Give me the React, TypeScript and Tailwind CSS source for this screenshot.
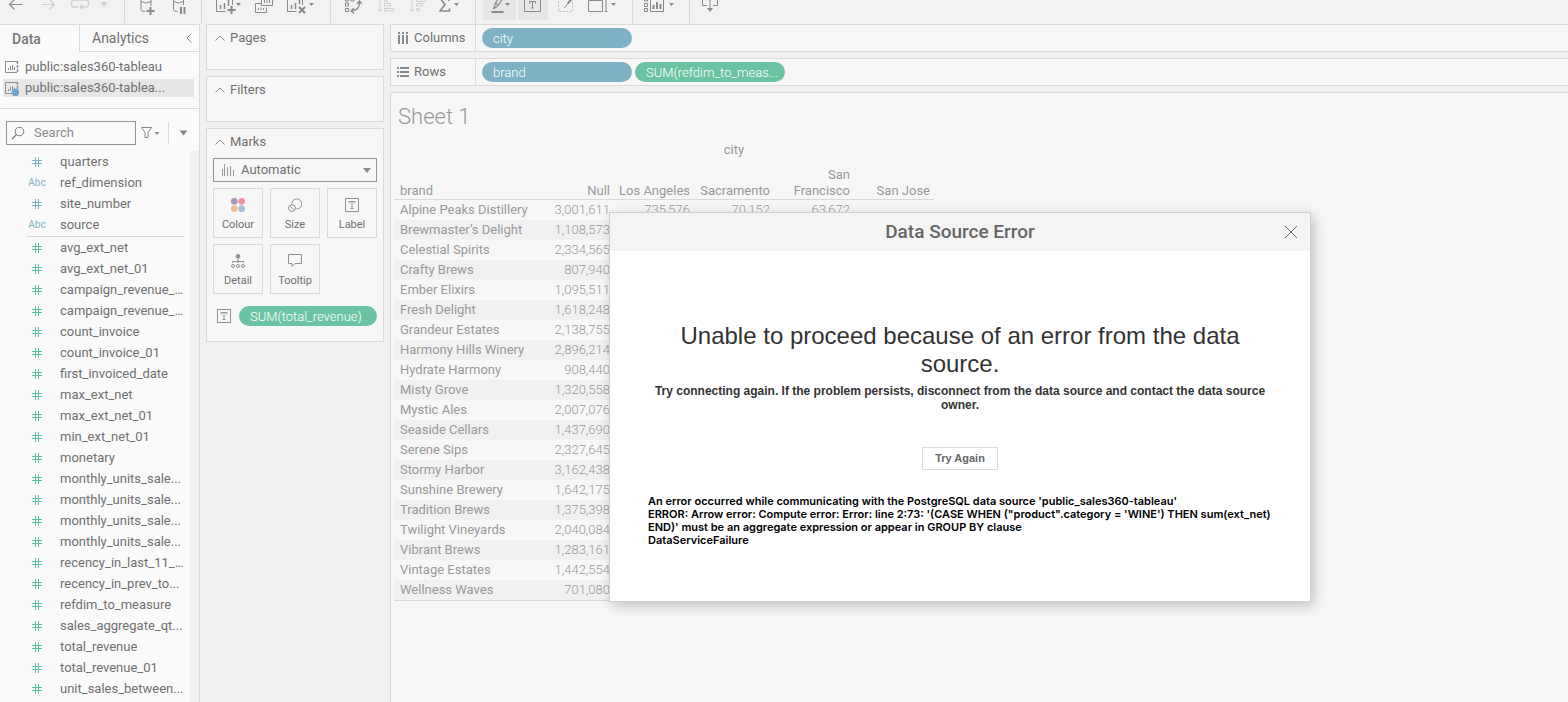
import type { ReactNode } from "react";

type Mark = { label: string; icon: ReactNode };
type Field = { name: string; kind: "number" | "text" };

const dimensions: Field[] = [
  { name: "quarters", kind: "number" },
  { name: "ref_dimension", kind: "text" },
  { name: "site_number", kind: "number" },
  { name: "source", kind: "text" },
];

const measures: string[] = [
  "avg_ext_net",
  "avg_ext_net_01",
  "campaign_revenue_...",
  "campaign_revenue_...",
  "count_invoice",
  "count_invoice_01",
  "first_invoiced_date",
  "max_ext_net",
  "max_ext_net_01",
  "min_ext_net_01",
  "monetary",
  "monthly_units_sale...",
  "monthly_units_sale...",
  "monthly_units_sale...",
  "monthly_units_sale...",
  "recency_in_last_11_...",
  "recency_in_prev_to...",
  "refdim_to_measure",
  "sales_aggregate_qt...",
  "total_revenue",
  "total_revenue_01",
  "unit_sales_between...",
];

const rows: string[][] = [
  ["Alpine Peaks Distillery", "3,001,611", "735,576", "70,152", "63,672", ""],
  ["Brewmaster’s Delight", "1,108,573"],
  ["Celestial Spirits", "2,334,565"],
  ["Crafty Brews", "807,940"],
  ["Ember Elixirs", "1,095,511"],
  ["Fresh Delight", "1,618,248"],
  ["Grandeur Estates", "2,138,755"],
  ["Harmony Hills Winery", "2,896,214"],
  ["Hydrate Harmony", "908,440"],
  ["Misty Grove", "1,320,558"],
  ["Mystic Ales", "2,007,076"],
  ["Seaside Cellars", "1,437,690"],
  ["Serene Sips", "2,327,645"],
  ["Stormy Harbor", "3,162,438"],
  ["Sunshine Brewery", "1,642,175"],
  ["Tradition Brews", "1,375,398"],
  ["Twilight Vineyards", "2,040,084"],
  ["Vibrant Brews", "1,283,161"],
  ["Vintage Estates", "1,442,554"],
  ["Wellness Waves", "701,080"],
];

const cities = ["Null", "Los Angeles", "Sacramento", "San Francisco", "San Jose"];

function Tool({ label, width, className, children }: { label: string; width: number; className: string; children: ReactNode }) {
  return (
    <button type="button" aria-label={label} className={`flex shrink-0 justify-center ${className}`}>
      <svg width={width} height="20" viewBox={`0 0 ${width} 20`} fill="none" stroke="currentColor" aria-hidden="true">
        {children}
      </svg>
    </button>
  );
}

function Rule() {
  return <div className="h-[23px] w-px shrink-0 bg-[#d8d8d8]" />;
}

function Caret({ x, y = 3 }: { x: number; y?: number }) {
  return <path d={`M${x} ${y}h5l-2.5 3z`} fill="currentColor" stroke="none" />;
}

function Toolbar() {
  return (
    <header className="flex h-6 items-start overflow-hidden bg-[#f2f2f2] text-[#8a8a8a]">
      <Tool label="Undo" width={16} className="w-8">
        <path d="M1.500 4.500H14.500M6.500 -.5l-5 5 5 5" strokeWidth="1.200" />
      </Tool>
      <Tool label="Redo" width={16} className="w-8 text-[#cfcfcf]">
        <path d="M1.500 4.500H14.500M9.500 -.5l5 5-5 5" strokeWidth="1.200" />
      </Tool>
      <Tool label="Replay" width={18} className="w-8 text-[#cfcfcf]">
        <path d="M7 7H3A2.500 2.500 0 0 1 .5 4.500V2.500A2.500 2.500 0 0 1 3 0h12a2.500 2.500 0 0 1 2.500 2.500V4.500A2.500 2.500 0 0 1 15 7H9M11.500 4.500L9 7l2.500 2.500" strokeWidth="1.300" />
      </Tool>
      <Tool label="Replay speed" width={8} className="mr-3 w-4 text-[#cfcfcf]">
        <path d="M.5 2h7L4 7z" fill="currentColor" stroke="none" />
      </Tool>
      <Rule />
      <Tool label="New data source" width={15} className="ml-1.5 w-8">
        <path d="M1 -4v13.500q0 2 4 2M1 1.500q5 3 10 0V-4M11 1v5" />
        <path d="M10.500 7v8M6.500 11h8" strokeWidth="2" />
      </Tool>
      <Tool label="Pause updates" width={13} className="mr-1.5 w-8">
        <path d="M.5 -4v13.500q0 2 4 2M.5 1.500q5 3 10 0V-4M10.500 1v4" />
        <path d="M8 7v7M11.500 7v7" strokeWidth="2" />
      </Tool>
      <Rule />
      <Tool label="New worksheet" width={25} className="ml-2 w-9">
        <path d="M.5 -2v13.500h9M16.500 -2v7" />
        <path d="M4.500 5v4M8.500 3v6M12.500 0v6" strokeWidth="1.500" />
        <path d="M15.500 6v8M11.500 10h8" strokeWidth="2" />
        <Caret x={20} />
      </Tool>
      <Tool label="Duplicate" width={19} className="w-9">
        <path d="M6 3.500H.5v9h11v-5M6.500 -2v7.500h11V-2M3.500 8v2M6 7.500V10M8.500 8v2M9.500 0v3M12 0v3M14.500 0v3" />
      </Tool>
      <Tool label="Clear sheet" width={28} className="mr-2.5 w-[38px]">
        <path d="M.5 -2v13.500h9M15.500 -2v7" />
        <path d="M4.500 5v4M8.500 3v6M12.500 0v4" strokeWidth="1.500" />
        <path d="M12 7l6 6M18 7l-6 6" strokeWidth="2" />
        <Caret x={22} />
      </Tool>
      <Rule />
      <Tool label="Swap rows and columns" width={17} className="ml-1.5 w-8">
        <path d="M.5 3h3v3h-3zM.5 8.500h3v3h-3zM.5 -2h3v3h-3zM6 -2h3v3H6z" />
        <path d="M14.500 2q.5 8-8 9M12 4l2.500-3L17 4M9 8l-3 3 3 2.500" strokeWidth="1.300" />
      </Tool>
      <Tool label="Sort ascending" width={17} className="w-8 text-[#cfcfcf]">
        <path d="M3 -2v13M.5 9L3 11.500 5.500 9M7.500 -1h3v2.500h-3zM7.500 3.500h6V6h-6zM7.500 8.500h9V11h-9z" />
      </Tool>
      <Tool label="Sort descending" width={17} className="w-8 text-[#cfcfcf]">
        <path d="M3 -2v13M.5 9L3 11.500 5.500 9M7.500 -1h9v2.500h-9zM7.500 3.500h6V6h-6zM7.500 8.500h3V11h-3z" />
      </Tool>
      <Tool label="Totals" width={20} className="mr-2.5 w-8">
        <path d="M10 1V-1.500H1.500L6 4.500l-5 6.500h9.500V8.500" strokeWidth="1.600" />
        <Caret x={15} />
      </Tool>
      <Rule />
      <Tool label="Highlight" width={20} className="ml-[7px] w-[33px] bg-[#e6e6e6]">
        <path d="M3.500 9l2-6 5-7M3.500 9l5-4 4.500-7M5.500 3l3 2" strokeWidth="1.200" />
        <path d="M1.500 12h12" strokeWidth="2" />
        <Caret x={15} />
      </Tool>
      <Tool label="Show mark labels" width={18} className="ml-0.5 w-[30px] bg-[#e6e6e6]">
        <path d="M.5 -2v13.500h16V-2M5.500 3.500V1.500h6v2M8.500 1.500V8M7 8h3" />
      </Tool>
      <Tool label="Format" width={16} className="ml-0.5 w-8">
        <path d="M.5 -2v13.500h14V-2" strokeDasharray="2 1.500" stroke="#bbb" />
        <path d="M13.500 -1l-4 5" strokeWidth="2" />
        <path d="M9.500 4L6.500 8" />
      </Tool>
      <Tool label="Fit" width={28} className="mr-3 ml-0.5 w-9">
        <path d="M.5 .5h14v11H.5zM18 -2v13.500M16.500 11.500h3" />
        <Caret x={23} />
      </Tool>
      <Rule />
      <Tool label="Show Me" width={30} className="mr-3 ml-2 w-9">
        <path d="M.5 -2h3v3h-3zM.5 3.500h3v3h-3zM.5 8.500h3v3h-3zM6.500 -2v13.500h13V-2" />
        <path d="M9.500 5v4M13 2v7M16.500 4v5" strokeWidth="2" />
        <Caret x={25} />
      </Tool>
      <Rule />
      <Tool label="Download" width={16} className="ml-1 w-8">
        <path d="M5 5.500H.5V-2M11 5.500h4.500V-2M8 0v9" />
        <path d="M5 8h6l-3 4z" fill="currentColor" stroke="none" />
      </Tool>
    </header>
  );
}

function SourceIcon({ active = false }: { active?: boolean }) {
  return (
    <svg width="16" height="16" viewBox="0 0 16 16" fill="none" stroke="#8f8f8f" aria-hidden="true">
      <path d="M14 13.500H2.500v-11h11.500M5.500 9v2M7.500 7v4M9.500 6v5M11.500 8v3" />
      <path d="M14.500 2v12" strokeWidth="1.500" strokeDasharray="3 1" />
      {active && <circle cx="12.400" cy="12.400" r="3.600" fill="#6fa3cc" stroke="none" />}
    </svg>
  );
}

function HashIcon() {
  return (
    <svg width="10" height="10" viewBox="0 0 10 10" fill="none" stroke="currentColor" aria-hidden="true">
      <path d="M0 3.500h10M0 6.500h10M3.500 0v10M6.500 0v10" />
    </svg>
  );
}

function FieldRow({ name, icon, tone }: { name: string; icon: ReactNode; tone: string }) {
  return (
    <li>
      <button type="button" className="flex h-[21px] w-full items-center text-left">
        <span className={`ml-[27px] flex w-5 shrink-0 justify-center text-[10px] ${tone}`}>{icon}</span>
        <span className="ml-[13px] truncate">{name}</span>
      </button>
    </li>
  );
}

function DataPane() {
  return (
    <aside className="flex w-[200px] shrink-0 flex-col border-t border-r border-[#dadada] bg-[#fafafa]">
      <div className="flex h-[27px] text-sm">
        <button type="button" className="w-[79px] pl-3 text-left font-medium text-[#777]">Data</button>
        <div className="flex flex-1 items-center justify-between border-b border-l border-[#dadada] pr-1.5 pl-3">
          <button type="button">Analytics</button>
          <button type="button" aria-label="Collapse pane">
            <svg width="8" height="12" viewBox="0 0 8 12" fill="none" stroke="#8a8a8a" aria-hidden="true">
              <path d="M6.500 1.500L2 6l4.500 4.500" />
            </svg>
          </button>
        </div>
      </div>
      <div className="flex flex-col gap-[3px] border-b border-[#dadada] px-[3px] pt-1.5 pb-[11px]">
        <button type="button" className="mr-0.5 flex h-[18px] items-center gap-1.5">
          <SourceIcon />
          public:sales360-tableau
        </button>
        <button type="button" className="mr-0.5 flex h-[18px] items-center gap-1.5 bg-[#e7e7e7]">
          <SourceIcon active />
          public:sales360-tablea...
        </button>
      </div>
      <div className="flex items-center pt-3 pb-1.5 pl-1.5">
        <label className="flex h-6 w-[130px] items-center gap-2 border border-[#959595] pl-1">
          <svg width="14" height="14" viewBox="0 0 14 14" fill="none" stroke="#777" aria-hidden="true">
            <circle cx="8.500" cy="5.500" r="4.300" />
            <path d="M5.500 8.500L1 13" strokeWidth="1.300" />
          </svg>
          <input aria-label="Search" placeholder="Search" className="w-20 bg-transparent pl-px outline-none placeholder:text-[#8a8a8a]" />
        </label>
        <button type="button" aria-label="Filter fields" className="ml-[5px]">
          <svg width="19" height="14" viewBox="0 0 19 14" fill="none" stroke="#888" aria-hidden="true">
            <path d="M.5 1.500h10L7 6.500v5H4v-5z" />
            <path d="M13.500 6h5L16 9z" fill="#888" stroke="none" />
          </svg>
        </button>
        <div className="ml-2 h-[22px] w-px bg-[#dadada]" />
        <button type="button" aria-label="Data menu" className="ml-2.5">
          <svg width="9" height="8" viewBox="0 0 9 8" aria-hidden="true">
            <path d="M.5 1.500h8l-4 5z" fill="#888" />
          </svg>
        </button>
      </div>
      <div className="flex flex-1">
        <div className="min-w-0 flex-1 pr-1.5">
          <ul>
            {dimensions.map((f) => (
              <FieldRow key={f.name} name={f.name} tone="text-[#7fb3c8]" icon={f.kind === "number" ? <HashIcon /> : "Abc"} />
            ))}
          </ul>
          <hr className="mt-px ml-[27px] border-[#d5d5d5]" />
          <ul>
            {measures.map((name, i) => (
              <FieldRow key={i} name={name} tone="text-[#5fc0a0]" icon={<HashIcon />} />
            ))}
          </ul>
        </div>
        <div className="w-[9px] bg-[#f1f1f1]" />
      </div>
    </aside>
  );
}

function Heading({ children }: { children: ReactNode }) {
  return (
    <h2 className="flex h-[26px] items-center gap-[5px] pl-2">
      <svg width="10" height="6" viewBox="0 0 10 6" fill="none" stroke="#8a8a8a" aria-hidden="true">
        <path d="M.5 5.500L5 1l4.500 4.500" />
      </svg>
      {children}
    </h2>
  );
}

function LabelIcon() {
  return (
    <svg width="14" height="14" viewBox="0 0 14 14" fill="none" stroke="#8f8f8f" aria-hidden="true">
      <path d="M.5 .5h13v13H.5zM4 5.500V3.500h6v2M7 3.500v7M5.500 10.500h3" />
    </svg>
  );
}

const marks: Mark[] = [
  {
    label: "Colour",
    icon: (
      <svg width="14" height="14" viewBox="0 0 14 14" aria-hidden="true">
        <circle cx="3.300" cy="3.300" r="3.400" fill="#a998b9" />
        <circle cx="10.700" cy="3.300" r="3.400" fill="#f193a2" />
        <circle cx="3.300" cy="10.700" r="3.400" fill="#f3bd9b" />
        <circle cx="10.700" cy="10.700" r="3.400" fill="#a5bedb" />
      </svg>
    ),
  },
  {
    label: "Size",
    icon: (
      <svg width="14" height="14" viewBox="0 0 14 14" fill="none" stroke="#8f8f8f" aria-hidden="true">
        <path d="M3.800 5.200a5 5 0 1 1 4.500 5.700" />
        <circle cx="4" cy="10" r="3.400" />
        <path d="M2.500 8.500l3 3" />
      </svg>
    ),
  },
  { label: "Label", icon: <LabelIcon /> },
  {
    label: "Detail",
    icon: (
      <svg width="14" height="14" viewBox="0 0 14 14" fill="none" stroke="#8f8f8f" aria-hidden="true">
        <circle cx="7" cy="2.200" r="2.200" fill="#8f8f8f" stroke="none" />
        <path d="M7 4v5M1.500 9V7.500h11V9" />
        <circle cx="2" cy="12" r="1.500" />
        <circle cx="7" cy="12" r="1.500" />
        <circle cx="12" cy="12" r="1.500" />
      </svg>
    ),
  },
  {
    label: "Tooltip",
    icon: (
      <svg width="14" height="14" viewBox="0 0 14 14" fill="none" stroke="#8f8f8f" aria-hidden="true">
        <path d="M.5 .5h13v9H7l-3 3v-3H.5z" />
      </svg>
    ),
  },
];

function Shelves() {
  return (
    <section className="flex w-[190px] shrink-0 flex-col gap-1.5 px-1.5">
      <div className="h-[46px] border border-[#dadada] bg-[#f7f7f7]">
        <Heading>Pages</Heading>
      </div>
      <div className="h-[46px] border border-[#dadada] bg-[#f7f7f7]">
        <Heading>Filters</Heading>
      </div>
      <div className="border border-[#dadada] bg-[#f7f7f7] pb-[15px]">
        <Heading>Marks</Heading>
        <div className="px-1.5 pt-[3px]">
          <div className="relative">
            <select aria-label="Mark type" className="block h-6 w-full appearance-none border border-[#959595] bg-transparent pl-[27px] outline-none">
              <option>Automatic</option>
            </select>
            <svg className="pointer-events-none absolute top-1.5 left-2" width="14" height="12" viewBox="0 0 14 12" fill="none" stroke="#999" aria-hidden="true">
              <path d="M1.500 5v7M3.500 0v12M6.500 3v9M9.500 2v10M12.500 6v6" />
            </svg>
            <svg className="pointer-events-none absolute top-2.5 right-1.5" width="8" height="5" viewBox="0 0 8 5" aria-hidden="true">
              <path d="M0 0h8L4 5z" fill="#8a8a8a" />
            </svg>
          </div>
          <div className="mt-1.5 grid grid-cols-[50px_50px_50px] justify-between gap-y-1.5">
            {marks.map((m) => (
              <button key={m.label} type="button" className="flex h-[50px] flex-col items-center gap-[5px] border border-[#dadada] pt-[9px] text-[11px] leading-[15px]">
                {m.icon}
                {m.label}
              </button>
            ))}
          </div>
          <div className="mt-3 flex items-center gap-2 pl-1">
            <LabelIcon />
            <button type="button" className="h-5 flex-1 rounded-full bg-[#6cc3a4] pt-px pl-[11px] text-left font-light text-white">SUM(total_revenue)</button>
          </div>
        </div>
      </div>
    </section>
  );
}

function Shelf({ icon, label, children }: { icon: ReactNode; label: string; children: ReactNode }) {
  return (
    <div className="flex h-7 border-y border-l border-[#dadada] bg-[#f7f7f7]">
      <div className="flex w-[85px] items-center gap-[5px] border-r border-[#dadada] pl-1.5">
        {icon}
        {label}
      </div>
      <div className="flex items-center gap-[3px] pl-1.5">{children}</div>
    </div>
  );
}

function Sheet() {
  return (
    <main className="flex min-w-0 flex-1 flex-col gap-1.5">
      <Shelf
        label="Columns"
        icon={
          <svg width="12" height="12" viewBox="0 0 12 12" fill="none" stroke="#8a8a8a" strokeWidth="2" aria-hidden="true">
            <path d="M2 0v2M6 0v2M10 0v2M2 3v9M6 3v9M10 3v9" />
          </svg>
        }
      >
        <button type="button" className="h-5 w-[150px] rounded-full bg-[#7fb2c7] pt-px pl-[11px] text-left font-light text-white">city</button>
      </Shelf>
      <Shelf
        label="Rows"
        icon={
          <svg width="12" height="12" viewBox="0 0 12 12" fill="none" stroke="#8a8a8a" strokeWidth="2" aria-hidden="true">
            <path d="M0 2h2M0 6h2M0 10h2M3 2h9M3 6h9M3 10h9" />
          </svg>
        }
      >
        <button type="button" className="h-5 w-[150px] rounded-full bg-[#7fb2c7] pt-px pl-[11px] text-left font-light text-white">brand</button>
        <button type="button" className="h-5 w-[150px] rounded-full bg-[#6cc3a4] pt-px pl-[11px] text-left font-light text-white">SUM(refdim_to_meas...</button>
      </Shelf>
      <div className="flex-1 border-t border-l border-[#dadada] bg-[#f7f7f7] pt-2 pl-[3px]">
        <h1 className="pl-1 text-[22px] leading-8 font-light text-[#999]">Sheet 1</h1>
        <table className="mt-[7px] w-[540px] table-fixed border-collapse text-[#999]">
          <colgroup>
            <col className="w-[140px]" />
            <col span={5} />
          </colgroup>
          <thead>
            <tr className="h-5">
              <td />
              <th colSpan={5} className="font-normal">city</th>
            </tr>
            <tr className="h-[39px] border-b border-[#d8d8d8] align-bottom leading-4">
              <th className="pl-1.5 text-left font-normal">brand</th>
              {cities.map((c) => (
                <th key={c} className="pr-1 text-right font-normal">{c}</th>
              ))}
            </tr>
          </thead>
          <tbody className="border-b border-[#d8d8d8]">
            {rows.map((r) => (
              <tr key={r[0]} className="h-5 leading-5 even:bg-[#f1f1f1]">
                <th className="pl-1.5 text-left font-normal whitespace-nowrap">{r[0]}</th>
                {cities.map((c, i) => (
                  <td key={c} className="pr-1 text-right font-light">{r[i + 1] ?? ""}</td>
                ))}
              </tr>
            ))}
          </tbody>
        </table>
      </div>
    </main>
  );
}

function ErrorDialog() {
  return (
    <div
      role="dialog"
      aria-labelledby="dialog-title"
      className="absolute top-[212px] left-[609px] w-[702px] border border-[#cfcfcf] bg-white pb-[54px] shadow-[3px_4px_12px_rgba(0,0,0,0.22)]"
    >
      <div className="grid h-[38px] grid-cols-[38px_1fr_38px] items-center bg-[#f4f4f4]">
        <h2 id="dialog-title" className="col-start-2 text-center text-[19px] font-medium text-[#666]">Data Source Error</h2>
        <button type="button" aria-label="Close" className="flex justify-center">
          <svg width="14" height="14" viewBox="0 0 14 14" fill="none" stroke="#666" aria-hidden="true">
            <path d="M1 1l12 12M13 1L1 13" />
          </svg>
        </button>
      </div>
      <div className="px-[38px] pt-[71px]">
        <div className="text-center font-['Liberation_Sans',Arial,sans-serif] text-[#333]">
          <h3 className="text-2xl leading-7">Unable to proceed because of an error from the data source.</h3>
          <p className="mt-1.5 text-xs leading-[14px] font-bold">
            Try connecting again. If the problem persists, disconnect from the data source and contact the data source owner.
          </p>
          <button type="button" className="mt-[35px] h-[23px] w-[76px] border border-[#dcdcdc] text-[11px] font-bold text-[#666]">Try Again</button>
        </div>
        <p className="mt-[25px] font-[Inter,'Liberation_Sans',sans-serif] text-[11px] leading-[13px] font-semibold text-black">
          An error occurred while communicating with the PostgreSQL data source 'public_sales360-tableau'
          <br />
          ERROR: Arrow error: Compute error: Error: line 2:73: '(CASE WHEN ("product".category = 'WINE') THEN sum(ext_net) END)' must be an aggregate expression or appear in GROUP BY clause
          <br />
          DataServiceFailure
        </p>
      </div>
    </div>
  );
}

export default function App() {
  return (
    <div className="relative flex min-h-screen flex-col bg-[#f1f1f1] font-[Roboto,'Liberation_Sans',sans-serif] text-[13px] text-[#707070]">
      <Toolbar />
      <div className="flex flex-1">
        <DataPane />
        <Shelves />
        <Sheet />
      </div>
      <ErrorDialog />
    </div>
  );
}
